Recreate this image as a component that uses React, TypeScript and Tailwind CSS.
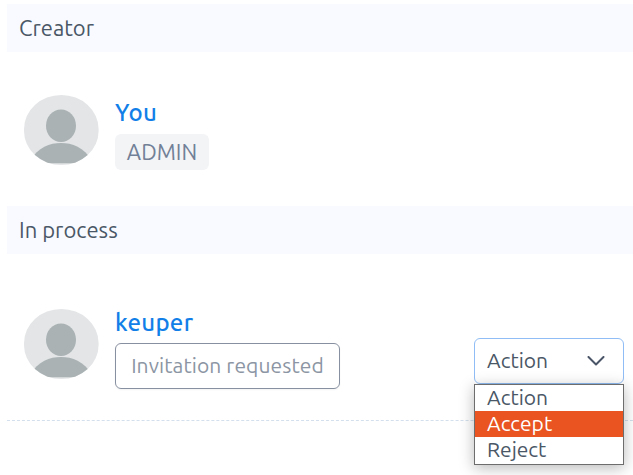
import React from 'react';

function Avatar() {
  return (
    <svg className="h-[70px] w-[75px] shrink-0" viewBox="0 0 75 70" aria-hidden="true">
      <defs>
        <clipPath id="avatar-clip">
          <rect width="74.6" height="70" rx="37.3" ry="34" />
        </clipPath>
      </defs>
      <g clipPath="url(#avatar-clip)">
        <rect width="75" height="70" fill="#e3e5e6" />
        <ellipse cx="37" cy="30.8" rx="15" ry="16.2" fill="#aab2b4" />
        <path d="M6 66 C14 52 26 48 37 48 S60 52 68 66 V68.3 H6Z" fill="#aab2b4" />
      </g>
    </svg>
  );
}

function SectionHeader({ title }: { title: string }) {
  return (
    <div className="flex h-12 items-center bg-[#f9faff] pl-3 text-[#4a5766]">
      <h2 className="text-[22px] leading-[30px]">{title}</h2>
    </div>
  );
}

const options = ['Action', 'Accept', 'Reject'];

function ActionSelect() {
  return (
    <div className="relative mt-[29px] mr-[9px] ml-auto w-[150px] text-[21px] text-[#4a5766]">
      <button className="flex h-[46px] w-full items-center justify-between rounded-[6px] border border-[#90bdf5] bg-white pr-[18px] pl-3">
        <span>Action</span>
        <svg className="h-[10px] w-[18px]" viewBox="0 0 18 10" fill="none" stroke="#4a5568" strokeWidth="2" strokeLinecap="round" strokeLinejoin="round">
          <path d="M1.5 1 L9 8.5 L16.5 1" />
        </svg>
      </button>
      <ul className="absolute top-[46px] left-0 z-10 w-full border border-[#6d6d6d] bg-white shadow-[0_3px_14px_rgba(0,0,0,0.28)]">
        {options.map((option) => (
          <li key={option} className={`h-[26px] pl-3 leading-[24px] last:h-[27px] ${option === 'Accept' ? 'bg-[#e95420] text-white' : ''}`}>
            {option}
          </li>
        ))}
      </ul>
    </div>
  );
}

export default function App() {
  return (
    <main className="h-[475px] w-full overflow-hidden bg-white pt-1 pl-[7px] font-['Ubuntu','Noto_Sans',sans-serif]">
      <SectionHeader title="Creator" />
      <section className="flex h-[154px] items-start pt-[43px] pl-[17px]">
        <Avatar />
        <div className="ml-4 flex flex-col items-start pt-[2px]">
          <a className="text-[24px] leading-[32px] font-medium tracking-[0.3px] text-[#127fe8]">You</a>
          <span className="mt-[5px] flex h-9 w-[94px] items-center justify-center rounded-[6px] bg-[#f3f4f6] pb-[2px] text-[22px] text-[#718096]">
            ADMIN
          </span>
        </div>
      </section>
      <SectionHeader title="In process" />
      <section className="flex h-[167px] items-start border-b border-dashed border-[#d3dfec] pt-[55px]">
        <div className="ml-[17px]">
          <Avatar />
        </div>
        <div className="ml-4 flex flex-col items-start">
          <a className="-mt-[2px] text-[24px] leading-[32px] font-medium tracking-[0.3px] text-[#127fe8]">keuper</a>
          <span className="mt-1 flex h-[46px] w-[225px] items-center justify-center rounded-[6px] border border-[#8790a0] text-[21px] tracking-[0.1px] whitespace-nowrap text-[#8b95a3] shadow-[0_1px_2px_rgba(0,0,0,0.05)]">
            Invitation requested
          </span>
        </div>
        <ActionSelect />
      </section>
    </main>
  );
}
